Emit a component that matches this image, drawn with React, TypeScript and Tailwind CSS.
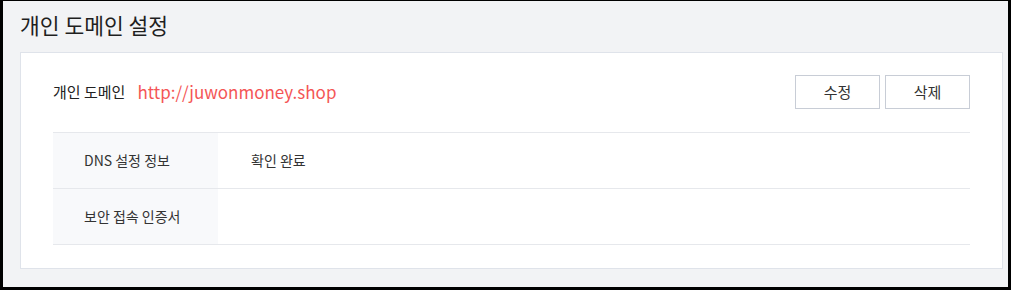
const font = { fontFamily: '"Noto Sans CJK KR", "Noto Sans", sans-serif' };

const rows = [
  { label: 'DNS 설정 정보', value: '확인 완료' },
  { label: '보안 접속 인증서', value: '' },
];

export default function App() {
  return (
    <div className="w-[1011px] h-[290px] bg-black pl-[3px] pr-[3px] pt-[1px] pb-[3px]" style={font}>
      <div className="h-full bg-[#f2f3f5] pl-[17px] pr-[5px]">
        <div className="h-[48px] flex items-center text-[21.5px] text-[#1f1f1f]">
          개인 도메인 설정
        </div>
        <div className="mt-[3px] bg-white border border-[#dfe3ea] px-8 pt-[22px] pb-[23px]">
          <div className="flex items-center justify-between h-[34px]">
            <div className="flex items-center">
              <span className="text-[15px] text-[#222]">개인 도메인</span>
              <span className="ml-[12px] text-[17px] text-[#f45656]">http://juwonmoney.shop</span>
            </div>
            <div className="flex gap-[5px]">
              <button className="w-[85px] h-[34px] border border-[#c8cdd6] bg-white text-[15px] text-[#333]">수정</button>
              <button className="w-[85px] h-[34px] border border-[#c8cdd6] bg-white text-[15px] text-[#333]">삭제</button>
            </div>
          </div>
          <div className="mt-[23px] border-t border-[#e6e8ec]">
            {rows.map((r) => (
              <div key={r.label} className="flex h-14 border-b border-[#e6e8ec] text-[14px] text-[#333]">
                <div className="w-[165px] bg-[#f8f9fb] flex items-center pl-[31px]">{r.label}</div>
                <div className="flex items-center pl-[33px]">{r.value}</div>
              </div>
            ))}
          </div>
        </div>
      </div>
    </div>
  );
}
